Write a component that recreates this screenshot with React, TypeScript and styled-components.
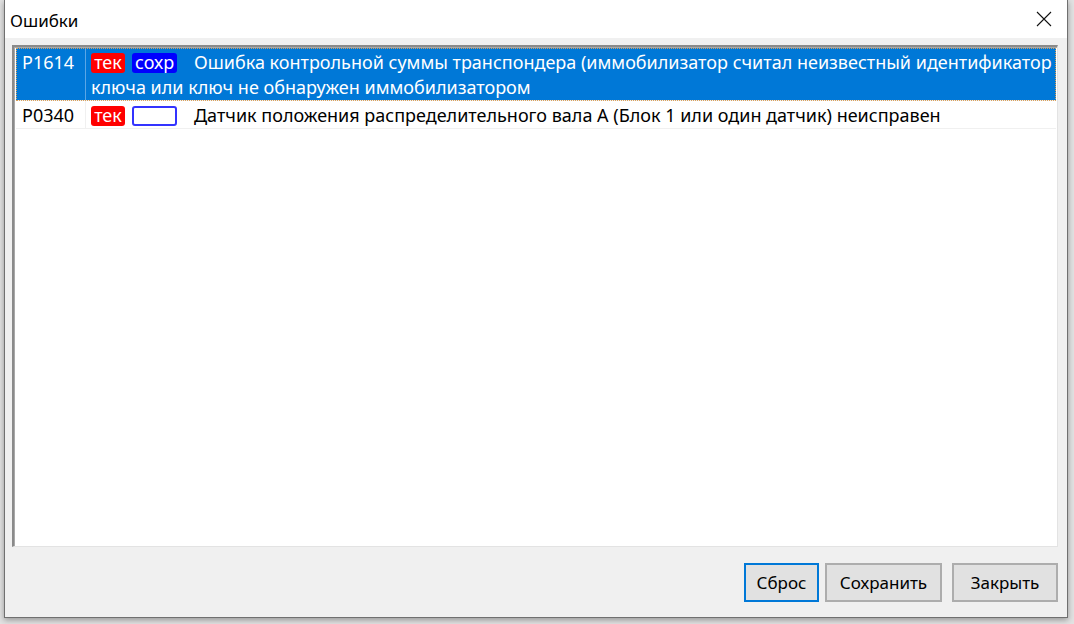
import React, { FC } from 'react';
import styled, { createGlobalStyle, css } from 'styled-components';

const GlobalStyle = createGlobalStyle`
  html, body {
    margin: 0;
    padding: 0;
    background: #e2e2e2;
  }
  * {
    box-sizing: border-box;
  }
`;

const FONT = `"Noto Sans", "Open Sans", "DejaVu Sans", sans-serif`;

interface IFault {
  code: string;
  current: boolean;
  stored: boolean;
  text: React.ReactNode;
}

const faults: IFault[] = [
  {
    code: 'P1614',
    current: true,
    stored: true,
    text: (
      <>
        Ошибка контрольной суммы транспондера (иммобилизатор считал неизвестный идентификатор
        <br />
        ключа или ключ не обнаружен иммобилизатором
      </>
    ),
  },
  {
    code: 'P0340',
    current: true,
    stored: false,
    text: 'Датчик положения распределительного вала А (Блок 1 или один датчик) неисправен',
  },
];

/**
 * Окно со списком ошибок
 */
const App: FC = () => {
  return (
    <>
      <GlobalStyle />
      <Desktop>
        <Window>
          <TitleBar>
            <Title>Ошибки</Title>
            <CloseButton aria-label="close">
              <svg width="16" height="16" viewBox="0 0 16 16">
                <path d="M1 1 L15 15 M15 1 L1 15" stroke="#111" strokeWidth="1.1" fill="none" />
              </svg>
            </CloseButton>
          </TitleBar>
          <Client>
            <ListBox>
              {faults.map((f, i) => (
                <Row key={f.code} $selected={i === 0}>
                  <CodeCell $selected={i === 0}>{f.code}</CodeCell>
                  <DescCell>
                    <Badge $kind={f.current ? 'current' : 'empty'}>{f.current ? 'тек' : ''}</Badge>
                    <Badge $kind={f.stored ? 'stored' : 'empty'}>{f.stored ? 'сохр' : ''}</Badge>
                    <Text>{f.text}</Text>
                  </DescCell>
                </Row>
              ))}
            </ListBox>
            <Buttons>
              <Button $focused $width={75}>Сброс</Button>
              <Button $width={117}>Сохранить</Button>
              <Button $width={106} $gapLeft={4}>Закрыть</Button>
            </Buttons>
          </Client>
        </Window>
      </Desktop>
    </>
  );
};

export default App;

const Desktop = styled.div`
  width: 1074px;
  height: 624px;
  padding: 0 6px 6px 4px;
  overflow: hidden;
  font-family: ${FONT};
`;

const Window = styled.div`
  width: 1064px;
  height: 618px;
  display: flex;
  flex-direction: column;
  background: #f0f0f0;
  border: 1px solid #707070;
  border-top: none;
  box-shadow: 0 2px 6px rgba(0, 0, 0, 0.35);
`;

const TitleBar = styled.div`
  height: 38px;
  flex-shrink: 0;
  display: flex;
  align-items: center;
  justify-content: space-between;
  background: #ffffff;
  padding-left: 5px;
`;

const Title = styled.span`
  font-size: 17px;
  color: #000;
  margin-top: 2px;
`;

const CloseButton = styled.div`
  width: 46px;
  height: 38px;
  display: flex;
  align-items: center;
  justify-content: center;
`;

const Client = styled.div`
  flex: 1;
  display: flex;
  flex-direction: column;
  padding: 7px 9px 15px 7px;
`;

const ListBox = styled.div`
  height: 502px;
  background: #ffffff;
  border-style: solid;
  border-width: 2px 1px 1px 2px;
  border-color: #8a8a8a #e3e3e3 #e3e3e3 #8a8a8a;
  box-shadow: inset 1px 1px 0 #a8a8a8;
  padding: 1px 1px 0 2px;
  font-size: 18px;
`;

const Row = styled.div<{ $selected?: boolean }>`
  display: grid;
  grid-template-columns: 70px 1fr;
  border-bottom: 1px solid #f0f0f0;
  line-height: 25px;
  ${({ $selected }) =>
    $selected
      ? css`
          background: #0078d7;
          color: #ffffff;
          outline: 1px dotted #d9a05a;
          outline-offset: -1px;
        `
      : css`
          color: #000000;
        `}
`;

const CodeCell = styled.div<{ $selected?: boolean }>`
  padding: 2px 0 0 6px;
  border-right: 1px solid ${({ $selected }) => ($selected ? '#5aa6e6' : '#f0f0f0')};
`;

const DescCell = styled.div`
  padding: 2px 2px 0 5px;
  white-space: nowrap;
`;

const Badge = styled.span<{ $kind: 'current' | 'stored' | 'empty' }>`
  display: inline-block;
  vertical-align: top;
  margin-top: 3px;
  height: 20px;
  line-height: 19px;
  padding: 0 3px;
  margin-right: 7px;
  border-radius: 3px;
  color: #ffffff;
  text-align: center;
  ${({ $kind }) =>
    $kind === 'current'
      ? css`
          background: #ff0000;
          width: 34px;
        `
      : $kind === 'stored'
      ? css`
          background: #0000ff;
          width: 45px;
        `
      : css`
          background: #ffffff;
          border: 2px solid #3333ff;
          width: 45px;
        `}
`;

const Text = styled.span`
  margin-left: 10px;
`;

const Buttons = styled.div`
  margin-top: 16px;
  display: flex;
  justify-content: flex-end;
  gap: 6px;
`;

const Button = styled.button<{ $focused?: boolean; $width: number; $gapLeft?: number }>`
  height: 39px;
  padding: 0;
  width: ${({ $width }) => $width}px;
  margin-left: ${({ $gapLeft }) => $gapLeft ?? 0}px;
  font-family: ${FONT};
  font-size: 17px;
  color: #000;
  background: #e1e1e1;
  border: ${({ $focused }) => ($focused ? '2px solid #0078d7' : '2px solid #adadad')};
`;
